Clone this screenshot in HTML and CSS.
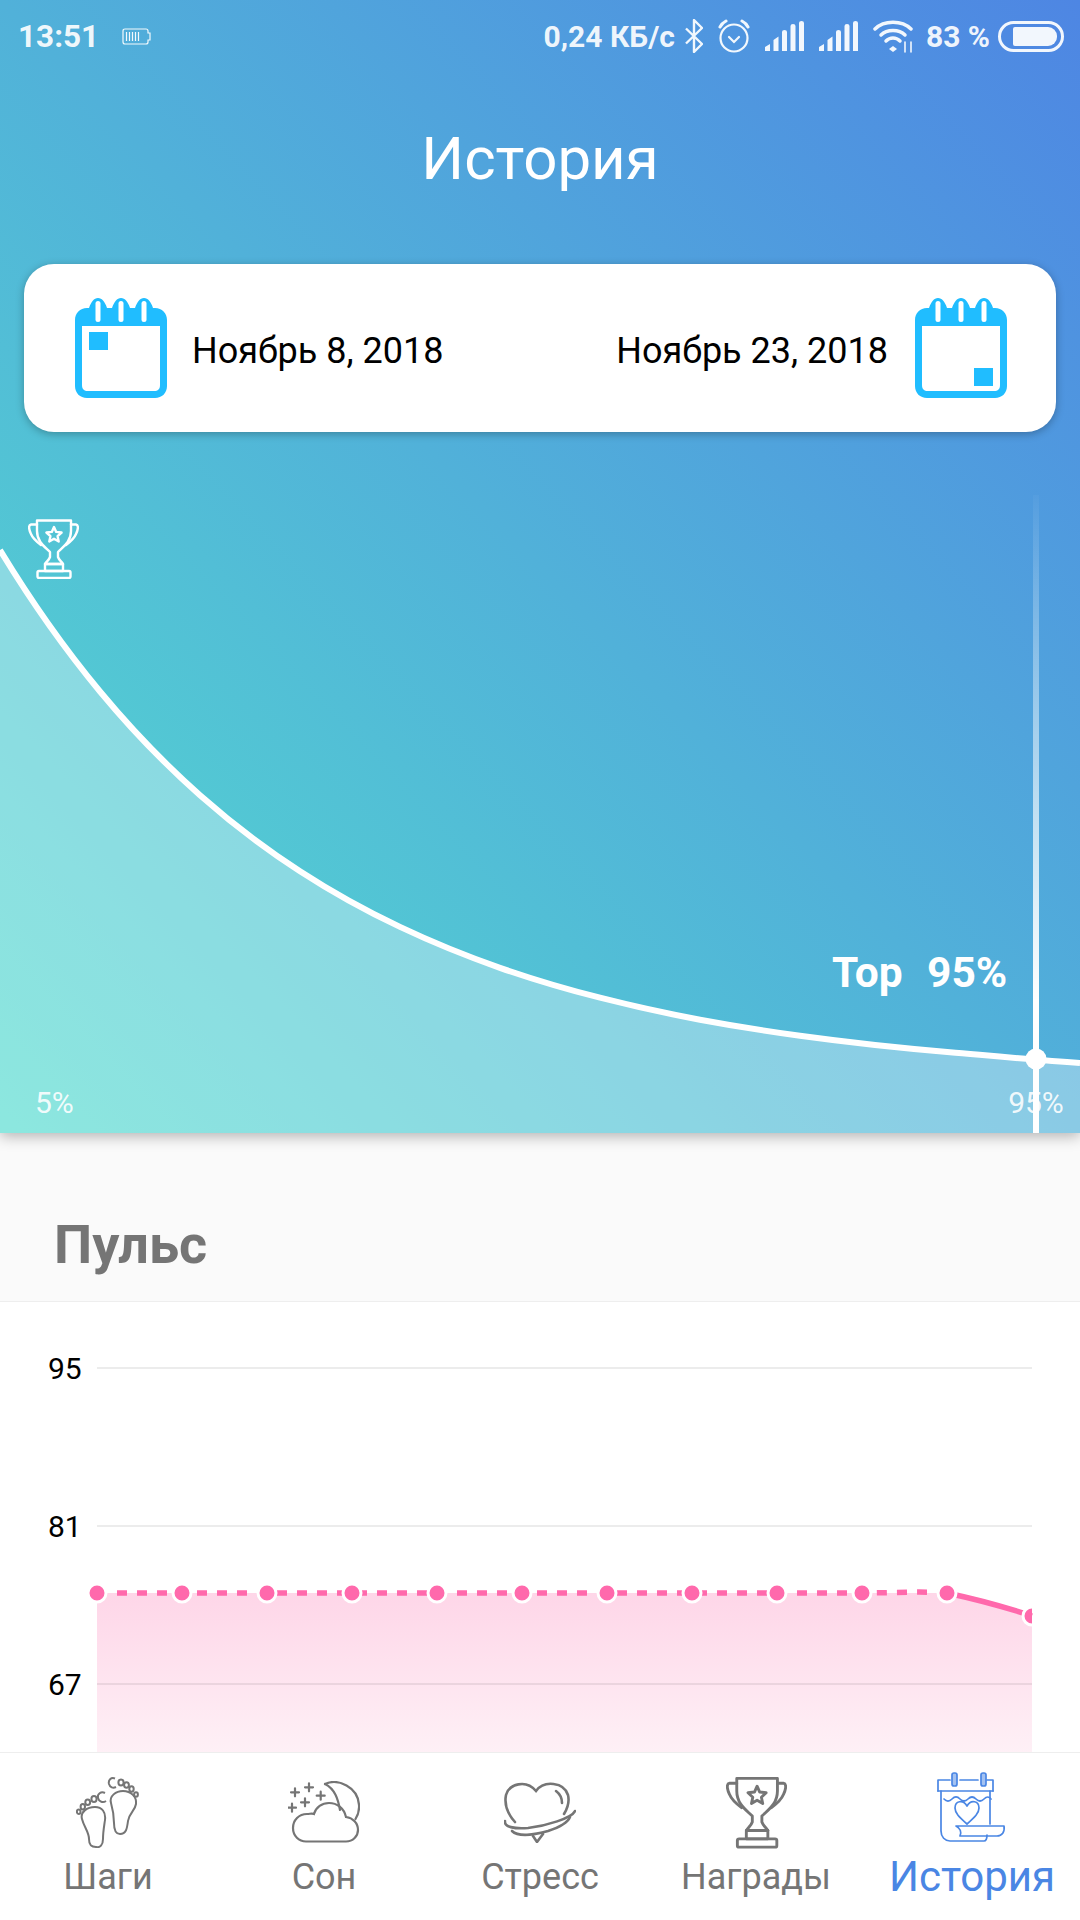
FILE: index.html
```html
<!DOCTYPE html>
<html lang="ru">
<head>
<meta charset="UTF-8" />
<meta name="viewport" content="width=device-width, initial-scale=1" />
<title>История</title>
<link rel="stylesheet" href="styles.css">
</head>
<body>
<svg class="sprites" width="0" height="0">
  <symbol id="trophy" viewBox="0 0 51 60">
    <g fill="none" stroke="currentColor" stroke-width="2.400" stroke-linejoin="round" stroke-linecap="round">
      <path d="M9 1.500H43V12C43 23 35 28 30 33V38C31 41 33 42 35 45H17C19 42 21 41 22 38V33C17 28 9 23 9 12Z"/>
      <path d="M9 5.500H3C0 6 1 11 3 15C5 20 9 23 13 26"/>
      <path d="M43 5.500H48C51 6 50 11 48 15C46 20 42 23 38 26"/>
      <rect x="17" y="45" width="18" height="7"/>
      <rect x="9.500" y="52" width="33" height="7" rx="1.500"/>
      <path d="M26 8L28.200 12.900 33.600 13.500 29.600 17.200 30.700 22.500 26 19.800 21.300 22.500 22.400 17.200 18.400 13.500 23.800 12.900Z"/>
    </g>
  </symbol>
  <symbol id="calendar" viewBox="0 0 92 100">
    <path fill="#20bdff" fill-rule="evenodd" d="M14 10C16 4 19 0 23 0S30 4 32 10H37C39 4 42 0 46 0S53 4 55 10H60C62 4 65 0 69 0S76 4 78 10H80C87 10 92 15 92 22V88C92 95 87 100 80 100H12C5 100 0 95 0 88V22C0 15 5 10 12 10ZM7 28V87C7 91 9 93 13 93H79C83 93 85 91 85 87V28Z"/>
    <rect x="20.500" y="3" width="5" height="21" rx="2.500" fill="#fff"/>
    <rect x="43.500" y="3" width="5" height="21" rx="2.500" fill="#fff"/>
    <rect x="66.500" y="3" width="5" height="21" rx="2.500" fill="#fff"/>
  </symbol>
  <symbol id="signal" viewBox="0 0 39 30">
    <path fill="currentColor" d="M0 30V26L5 23V30ZM8.500 30V19L13.500 15.500V30ZM17 30V11Q17 9 19.500 9T22 11V30ZM25.500 30V5Q25.500 3 28 3T30.500 5V30ZM34 30V2Q34 0 36.500 0T39 2V30Z"/>
  </symbol>
</svg>

<main class="screen">
  <section class="hero">
    <div class="statusbar">
      <div class="statusbar__left">
        <span class="statusbar__time">13:51</span>
        <svg class="mini-battery" width="31" height="17" viewBox="0 0 31 17">
          <path d="M3 1H24Q26 1 26 3V5H28V12H26V14Q26 16 24 16H3Q1 16 1 14V3Q1 1 3 1Z" fill="none" stroke="currentColor" stroke-width="1.200"/>
          <path d="M4.500 4V13M7.500 4V13M10.500 4V13M13.500 4V13M16.500 4V13" stroke="currentColor" stroke-width="1.200"/>
        </svg>
      </div>
      <div class="statusbar__right">
        <span class="statusbar__speed">0,24 КБ/с</span>
        <svg width="18" height="34" viewBox="0 0 18 34" fill="none" stroke="currentColor" stroke-width="2.400" stroke-linejoin="round"><path d="M1 9.500L17 25 9 33V1L17 9 1 24.500"/></svg>
        <svg width="32" height="34" viewBox="0 0 32 34" fill="none" stroke="currentColor" stroke-linecap="round"><circle cx="16" cy="19" r="13.500" stroke-width="2.200"/><path d="M11 18L16 23 21 18" stroke-width="2.200"/><path d="M2 8Q4 4 8 2M30 8Q28 4 24 2" stroke-width="3"/></svg>
        <svg width="39" height="30"><use href="#signal"/></svg>
        <svg width="39" height="30"><use href="#signal"/></svg>
        <svg width="40" height="34" viewBox="0 0 40 34" fill="none" stroke="currentColor" stroke-linecap="round"><path d="M2 10C11 1 29 1 38 10" stroke-width="3.500"/><path d="M8 16C14 10 26 10 32 16" stroke-width="3.500"/><path d="M13 22C17 18 23 18 27 22" stroke-width="3.500"/><path d="M20 27L24 30 20 33 16 30Z" fill="currentColor" stroke="none"/><path d="M32 23V33M38 23V33" stroke-width="1.600"/></svg>
        <span class="statusbar__percent">83 %</span>
        <div class="battery"><div class="battery__fill"></div></div>
      </div>
    </div>

    <h1 class="hero__title">История</h1>

    <div class="dates">
      <div class="dates__item">
        <svg class="dates__icon" width="92" height="100"><use href="#calendar"/><rect x="14" y="34" width="19" height="18" fill="#20bdff"/></svg>
        <span class="dates__text">Ноябрь 8, 2018</span>
      </div>
      <div class="dates__item dates__item--end">
        <span class="dates__text">Ноябрь 23, 2018</span>
        <svg class="dates__icon" width="92" height="100"><use href="#calendar"/><rect x="59" y="70" width="19" height="18" fill="#20bdff"/></svg>
      </div>
    </div>

    <svg class="curve" width="1080" height="638" viewBox="0 495 1080 638">
      <defs>
        <linearGradient id="markerFade" x1="0" y1="495" x2="0" y2="1000" gradientUnits="userSpaceOnUse">
          <stop offset="0" stop-color="#fff" stop-opacity="0.03"/>
          <stop offset="1" stop-color="#fff"/>
        </linearGradient>
      </defs>
      <use class="curve__trophy" href="#trophy" x="28" y="519" width="51" height="60"/>
      <path class="curve__area" d="M0 550C33.300 604.900 66.700 651.300 100 691.500C133.300 731.700 166.700 765.700 200 795.200C233.300 824.700 266.700 849.600 300 871.200C333.300 892.800 366.700 911.100 400 926.900C433.300 942.700 466.700 956.200 500 967.800C533.300 979.400 566.700 989.200 600 997.700C633.300 1006.200 666.700 1013.500 700 1019.700C733.300 1025.900 766.700 1031.200 800 1035.800C850 1042.700 900 1048 950 1052.300C993.300 1056 1036.700 1060 1080 1063V1133H0Z"/>
      <path class="curve__line" d="M0 550C33.300 604.900 66.700 651.300 100 691.500C133.300 731.700 166.700 765.700 200 795.200C233.300 824.700 266.700 849.600 300 871.200C333.300 892.800 366.700 911.100 400 926.900C433.300 942.700 466.700 956.200 500 967.800C533.300 979.400 566.700 989.200 600 997.700C633.300 1006.200 666.700 1013.500 700 1019.700C733.300 1025.900 766.700 1031.200 800 1035.800C850 1042.700 900 1048 950 1052.300C993.300 1056 1036.700 1060 1080 1063"/>
      <rect x="1033" y="495" width="6" height="638" fill="url(#markerFade)"/>
      <circle cx="1036" cy="1059" r="10.500" fill="#fff"/>
      <text class="curve__top" x="832" y="987">Top</text>
      <text class="curve__top" x="927" y="987">95%</text>
      <text class="curve__tick" x="35" y="1113">5%</text>
      <text class="curve__tick" x="1036" y="1113" text-anchor="middle">95%</text>
    </svg>
  </section>

  <h2 class="section-title">Пульс</h2>

  <section class="pulse">
    <svg class="pulse__chart" width="1080" height="450" viewBox="0 1302 1080 450">
      <defs>
        <linearGradient id="pulseFill" x1="0" y1="1593" x2="0" y2="1752" gradientUnits="userSpaceOnUse">
          <stop offset="0" stop-color="#fed6e8"/>
          <stop offset="1" stop-color="#fef0f6"/>
        </linearGradient>
        <clipPath id="plotClip"><rect x="0" y="1302" width="1032" height="450"/></clipPath>
      </defs>
      <path d="M97 1593H947C975 1594 1005 1606 1032 1616V1752H97Z" fill="url(#pulseFill)"/>
      <path class="pulse__grid" d="M97 1368H1032M97 1526H1032M97 1684H1032"/>
      <text class="pulse__label" x="48" y="1379">95</text>
      <text class="pulse__label" x="48" y="1537">81</text>
      <text class="pulse__label" x="48" y="1695">67</text>
      <path class="pulse__dash" d="M97 1593H862C890 1593 920 1591 947 1593"/>
      <path class="pulse__solid" d="M947 1593C975 1599 1005 1607 1032 1616"/>
      <g class="pulse__dots" clip-path="url(#plotClip)">
        <circle cx="97" cy="1593" r="9"/>
        <circle cx="182" cy="1593" r="9"/>
        <circle cx="267" cy="1593" r="9"/>
        <circle cx="352" cy="1593" r="9"/>
        <circle cx="437" cy="1593" r="9"/>
        <circle cx="522" cy="1593" r="9"/>
        <circle cx="607" cy="1593" r="9"/>
        <circle cx="692" cy="1593" r="9"/>
        <circle cx="777" cy="1593" r="9"/>
        <circle cx="862" cy="1593" r="9"/>
        <circle cx="947" cy="1593" r="9"/>
        <circle cx="1032" cy="1616" r="9"/>
      </g>
    </svg>
  </section>

  <nav class="tabs">
    <a class="tabs__item">
      <div class="tabs__icon">
        <svg width="64" height="71" viewBox="0 0 64 71" fill="none" stroke="currentColor" stroke-width="2">
          <path d="M6 42C4 35 11 30 19 30C26 30 30 35 29 43C28 50 27 55 27 62C27 68 24 71 20 70C15 70 13 68 13 62C13 55 8 50 6 42Z"/>
          <ellipse cx="2.700" cy="34.700" rx="1.800" ry="2.200"/><ellipse cx="6.800" cy="29.700" rx="2.200" ry="2.700"/><ellipse cx="11.700" cy="25.300" rx="2.400" ry="2.800"/><ellipse cx="18" cy="22" rx="2.600" ry="3"/>
          <path d="M29 16C25 14 21 17 22 21C23 25 27 26 30 24"/>
          <path d="M35 26C33 19 40 14 47 14C55 14 61 20 60 27C59 34 53 36 52 44C51 52 50 57 44 57C39 57 38 52 38 46C38 38 37 33 35 26Z"/>
          <path d="M39 1.500C35 0 32 3 33 7C34 10.500 37 11.500 40 10"/>
          <ellipse cx="45" cy="5.500" rx="2.600" ry="3"/><ellipse cx="50.500" cy="8" rx="2.400" ry="2.800"/><ellipse cx="55.500" cy="12" rx="2.200" ry="2.700"/><ellipse cx="60" cy="17.500" rx="1.900" ry="2.300"/>
        </svg>
      </div>
      <span class="tabs__label">Шаги</span>
    </a>
    <a class="tabs__item">
      <div class="tabs__icon">
        <svg width="72" height="62" viewBox="0 0 72 62" fill="none" stroke="currentColor" stroke-width="2.200" stroke-linecap="round">
          <path d="M18 60.500H58C65 60.500 70 55 70 49C70 42 65 37 58 36C56 27 49 22 41 22C34 22 28 26 26 33C24 32 22 33 19 33C11 33 5 39 5 47C5 55 11 60.500 18 60.500Z"/>
          <path d="M37 3C50 -3 70 6 71 24C71.500 30 70 34 67.500 38"/>
          <path d="M37 3C47 8 50 18 52 29"/>
          <path d="M3 11.300H11M7 7.300V15.300M17 6.300H25M21 2.300V10.300M28.700 14.700H36.700M32.700 10.700V18.700M13 21.300H21M17 17.300V25.300M0 26.700H8M4 22.700V30.700"/>
        </svg>
      </div>
      <span class="tabs__label">Сон</span>
    </a>
    <a class="tabs__item">
      <div class="tabs__icon">
        <svg width="72" height="62" viewBox="0 0 72 62" fill="none" stroke="currentColor" stroke-width="2.600" stroke-linecap="round">
          <path d="M11 41C3 32 0 24 2 14C5 3 22 -2 32 10C40 -1 60 1 64 14C66 22 63 28 60 33"/>
          <path d="M52 10C56 13 58 17 58 22"/>
          <path d="M1 40C0 46 10 48 24 47C42 45 68 37 71 30"/>
          <path d="M8 50C14 56 30 54 44 50C56 46 64 41 66 36"/>
          <path d="M29 55L33 61 39 53"/>
        </svg>
      </div>
      <span class="tabs__label">Стресс</span>
    </a>
    <a class="tabs__item">
      <div class="tabs__icon">
        <svg class="tabs__cup" width="61" height="73"><use href="#trophy"/></svg>
      </div>
      <span class="tabs__label">Награды</span>
    </a>
    <a class="tabs__item tabs__item--active">
      <div class="tabs__icon">
        <svg class="tabs__book" width="70" height="71" viewBox="0 0 70 71" fill="none" stroke="currentColor" stroke-width="1.700" stroke-linecap="round" stroke-linejoin="round">
          <path d="M1 19V8H13M23 8H41M50 8H56V19"/>
          <rect x="15" y="1" width="5" height="13" rx="2" fill="currentColor" fill-opacity="0.5"/>
          <rect x="44" y="1" width="5" height="13" rx="2" fill="currentColor" fill-opacity="0.5"/>
          <path d="M1 19H56"/>
          <path d="M4 19V59C4 65 8 69 13 69H47C50 69 50 66 50 63"/>
          <path d="M53 19V52"/>
          <path d="M7 27Q11 31 15 27T23 27T31 27T39 27T47 27T54 27"/>
          <path d="M30 52C22 45 18 41 18 36C18 29 26 27 30 34C34 27 42 29 42 36C42 41 38 45 30 52Z"/>
          <path d="M19 54H67C68 60 65 64 60 64H23C25 60 23 56 19 54Z"/>
        </svg>
      </div>
      <span class="tabs__label">История</span>
    </a>
  </nav>
</main>
</body>
</html>
```

FILE: styles.css
```css
body {
  margin: 0;
  font-family: Roboto, "Noto Sans", sans-serif;
  background: #fff;
}
.sprites {
  display: block;
}
.screen {
  width: 1080px;
  height: 1920px;
  display: flex;
  flex-direction: column;
  overflow: hidden;
}

/* top part with gradient */
.hero {
  height: 1133px;
  flex: none;
  display: flex;
  flex-direction: column;
  background: linear-gradient(to top right, #54dccf, #4e86e3);
  box-shadow: 0 3px 14px rgba(0,0,0,0.3);
  position: relative;
  z-index: 1;
}
.statusbar {
  height: 72px;
  display: flex;
  justify-content: space-between;
  align-items: center;
  padding: 0 16px 0 18px;
  color: rgba(255,255,255,0.93);
  font-size: 30px;
  font-weight: 700;
}
.statusbar__left {
  display: flex;
  align-items: center;
  gap: 23px;
}
.statusbar__time {
  font-size: 31.500px;
}
.statusbar__right {
  display: flex;
  align-items: center;
  gap: 15px;
}
.statusbar__speed {
  margin-right: -5px;
}
.statusbar__percent {
  margin-left: -2px;
  margin-right: -7px;
}
.mini-battery {
  display: block;
}
.battery {
  width: 66px;
  height: 31px;
  box-sizing: border-box;
  border: 3px solid rgba(255,255,255,0.93);
  border-radius: 16px;
  padding: 3px 4px 3px 12px;
}
.battery__fill {
  height: 100%;
  background: rgba(255,255,255,0.93);
  border-radius: 2px 9px 9px 2px;
}
.hero__title {
  height: 172px;
  margin: 0;
  display: flex;
  align-items: center;
  justify-content: center;
  font-size: 60px;
  font-weight: 400;
  color: #fff;
}
.dates {
  height: 168px;
  margin: 20px 24px 0;
  padding: 0 49px 0 51px;
  display: flex;
  justify-content: space-between;
  align-items: center;
  background: #fff;
  border-radius: 30px;
  box-shadow: 0 2px 8px rgba(0,0,0,0.28);
  font-size: 36px;
  color: #000;
}
.dates__item {
  display: flex;
  align-items: center;
  gap: 25px;
}
.dates__item--end {
  gap: 27px;
}
.dates__text {
  padding-top: 5px;
}
.dates__icon {
  display: block;
}
.curve {
  display: block;
  margin-top: 63px;
}
.curve__trophy {
  color: #fff;
}
.curve__area {
  fill: rgba(255,255,255,0.33);
}
.curve__line {
  fill: none;
  stroke: #fff;
  stroke-width: 6;
}
.curve__top {
  font-size: 42.500px;
  font-weight: 700;
  fill: #fff;
}
.curve__tick {
  font-size: 30px;
  fill: rgba(255,255,255,0.9);
}

/* pulse block */
.section-title {
  height: 169px;
  flex: none;
  margin: 0;
  padding: 56px 0 0 54px;
  box-sizing: border-box;
  background: #fafafa;
  border-bottom: 1px solid #eee;
  font-size: 54px;
  font-weight: 700;
  line-height: 112px;
  color: #757575;
}
.pulse {
  height: 450px;
  flex: none;
  background: #fff;
}
.pulse__chart {
  display: block;
}
.pulse__grid {
  fill: none;
  stroke: rgba(0,0,0,0.1);
  stroke-width: 1.500;
}
.pulse__label {
  font-size: 30px;
  fill: #000;
}
.pulse__dash {
  fill: none;
  stroke: #ff69ac;
  stroke-width: 5.500;
  stroke-dasharray: 10 10;
}
.pulse__solid {
  fill: none;
  stroke: #ff69ac;
  stroke-width: 5.500;
}
.pulse__dots circle {
  fill: #ff69ac;
  stroke: #fff;
  stroke-width: 3;
}

/* bottom tabs */
.tabs {
  height: 168px;
  flex: none;
  display: grid;
  grid-template-columns: repeat(5, 216px);
  background: #fff;
  border-top: 1px solid #eee;
  box-sizing: border-box;
  position: relative;
  z-index: 1;
  color: #757575;
}
.tabs__item {
  display: flex;
  flex-direction: column;
  align-items: center;
  padding-top: 19px;
}
.tabs__icon {
  height: 80px;
  display: flex;
  align-items: center;
  justify-content: center;
}
.tabs__label {
  font-size: 36px;
  line-height: 50px;
  white-space: nowrap;
}
.tabs__item--active {
  color: #4a86e4;
}
.tabs__item--active .tabs__label {
  font-size: 42px;
}
.tabs__book {
  margin-bottom: 10px;
}
```
